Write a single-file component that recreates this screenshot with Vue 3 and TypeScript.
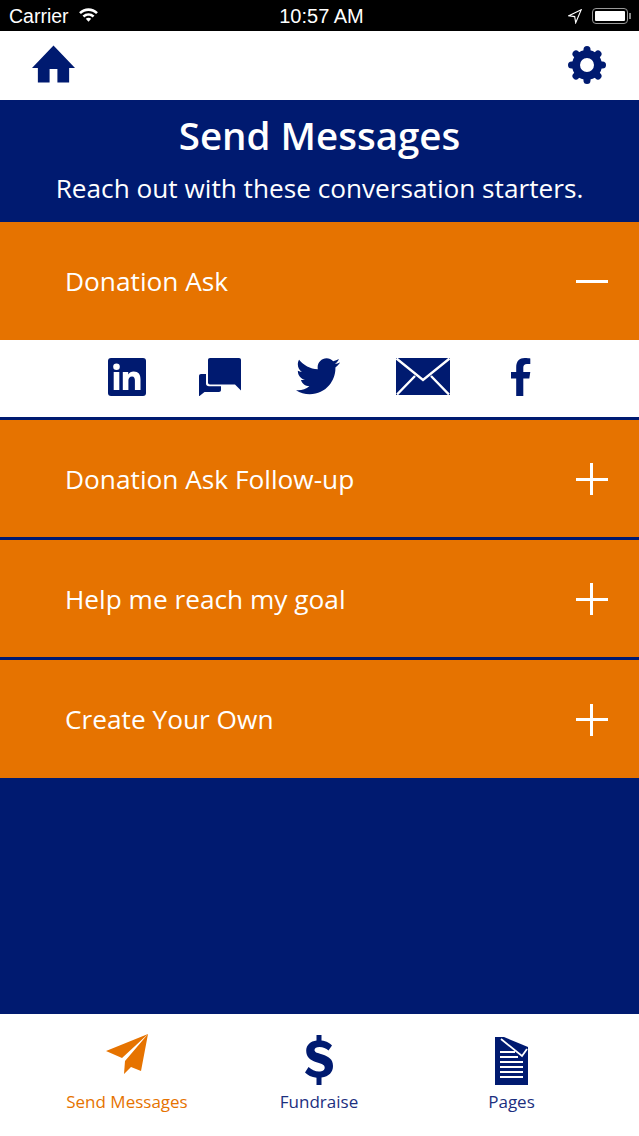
<template>
  <div class="screen">
    <div class="status-bar">
      <div class="status-left">
        <span>Carrier</span>
        <svg class="wifi" viewBox="0 0 20 15" width="21" height="15">
          <path d="M0.600 5.200C5.800 0 14.200 0 19.400 5.200L17.600 7.100C13.400 3 6.600 3 2.400 7.100Z" fill="#fff" />
          <path d="M4 8.600C7.400 5.300 12.600 5.300 16 8.600L14.200 10.400C11.800 8.100 8.200 8.100 5.800 10.400Z" fill="#fff" />
          <path d="M7.300 11.800C8.800 10.500 11.200 10.500 12.700 11.800L10 14.700Z" fill="#fff" />
        </svg>
      </div>
      <span class="status-time">10:57 AM</span>
      <div class="status-right">
        <svg viewBox="0 0 14 15" width="14" height="15">
          <path d="M13.200 0.800L0.800 6.800L6.700 7.600L7.700 13.800Z" fill="none" stroke="#fff" stroke-width="1.100" />
        </svg>
        <div class="battery"><div class="battery-level"></div></div>
        <div class="battery-tip"></div>
      </div>
    </div>

    <nav class="top-nav">
      <svg class="home" viewBox="0 0 44 38" width="44" height="38">
        <path d="M22 0L44 23H38V38H26V24H18V38H6V23H0Z" fill="#001a70" />
      </svg>
      <svg class="gear" viewBox="0 0 38 38" width="38" height="38">
        <circle cx="19" cy="19" r="11" fill="none" stroke="#001a70" stroke-width="8" />
        <g stroke="#001a70" stroke-width="7" stroke-linecap="round">
          <line x1="19" y1="3.500" x2="19" y2="8" />
          <line x1="19" y1="30" x2="19" y2="34.500" />
          <line x1="3.500" y1="19" x2="8" y2="19" />
          <line x1="30" y1="19" x2="34.500" y2="19" />
          <line x1="8" y1="8" x2="11" y2="11" />
          <line x1="27" y1="27" x2="30" y2="30" />
          <line x1="8" y1="30" x2="11" y2="27" />
          <line x1="27" y1="11" x2="30" y2="8" />
        </g>
      </svg>
    </nav>

    <header class="page-header">
      <h1>Send Messages</h1>
      <p>Reach out with these conversation starters.</p>
    </header>

    <section class="accordion">
      <div class="row row-first">
        <span>{{ rows[0] }}</span>
        <span class="toggle minus"></span>
      </div>
      <div class="share">
        <svg class="linkedin" viewBox="0 0 38 38" width="38" height="38">
          <rect width="38" height="38" rx="3" fill="#001a70" />
          <circle cx="8.500" cy="8.700" r="3.300" fill="#fff" />
          <rect x="5.700" y="14" width="5.600" height="18" fill="#fff" />
          <path d="M14.800 14H20.200V16.500C21.300 14.700 23.200 13.600 25.600 13.600C30.500 13.600 32.500 16.500 32.500 21.500V32H26.900V22.600C26.900 20.200 26.200 18.500 24 18.500C21.700 18.500 20.400 20.200 20.400 22.600V32H14.800Z" fill="#fff" />
        </svg>
        <svg class="chat" viewBox="0 0 42 38" width="42" height="38">
          <path d="M11 0H40C41.200 0 42 0.800 42 2V32.500L36 26.500H11C9.800 26.500 9 25.700 9 24.500V2C9 0.800 9.800 0 11 0Z" fill="#001a70" />
          <path d="M7 16V25.500C7 27.200 8.200 28.300 10 28.300H22V32C22 33.200 21.200 34 20 34H5.500L0.500 38H0V18C0 16.800 0.800 16 2 16Z" fill="#001a70" />
        </svg>
        <svg class="twitter" viewBox="0 0 24 20" width="44" height="37">
          <path
            d="M24 2.400c-.9.400-1.800.7-2.800.8 1-.6 1.800-1.600 2.200-2.700-1 .6-2 1-3.100 1.200C19.300.7 18 .1 16.700.1c-2.700 0-4.900 2.200-4.900 4.900 0 .4 0 .8.100 1.100C7.700 5.900 4.100 3.900 1.700.9 1.200 1.600 1 2.500 1 3.400c0 1.700.900 3.200 2.200 4.100-.8 0-1.600-.2-2.200-.6v.1c0 2.400 1.700 4.400 3.900 4.800-.7.200-1.500.2-2.200.1.600 2 2.400 3.400 4.600 3.400-2.100 1.600-4.300 2.500-7.300 2.200 2.200 1.400 4.800 2.200 7.500 2.200 9 0 14-7.500 14-14v-.6c1-.7 1.800-1.600 2.500-2.600z"
            fill="#001a70"
          />
        </svg>
        <svg class="mail" viewBox="0 0 54 37" width="54" height="37">
          <rect width="54" height="37" fill="#001a70" />
          <path d="M0.500 0.500L27 22L53.500 0.500M1 36.500L19 18M53 36.500L35 18" fill="none" stroke="#fff" stroke-width="2.400" />
        </svg>
        <svg class="facebook" viewBox="0 0 20 38" width="20" height="38">
          <path d="M5.200 38V20.500H0V14H5.200V9C5.200 3.200 8.500 0 13.700 0C16 0 18.400 0.300 19.300 0.500V6H16C13.500 6 12.300 7.300 12.300 9.400V14H19.300L18.300 20.500H12.300V38Z" fill="#001a70" />
        </svg>
      </div>
      <div v-for="label in rows.slice(1)" :key="label" class="row">
        <span>{{ label }}</span>
        <span class="toggle plus"></span>
      </div>
    </section>

    <div class="filler"></div>

    <footer class="tab-bar">
      <div class="tab active">
        <svg class="plane" viewBox="0 0 42 40" width="42" height="40">
          <path d="M42 0L0 17L16 24ZM42 0L19 27L18 40L25 33L35 37Z" fill="#e67300" />
        </svg>
        <span>Send Messages</span>
      </div>
      <div class="tab">
        <svg viewBox="0 0 28 50" width="28" height="50">
          <path
            d="M11.500 0H16.500V5.500C21.500 6 25.500 8.500 27 10.500L23.500 15.500C21 13.300 18 12 14.500 12C11.500 12 9.500 13 9.500 15C9.500 17.500 13 18 17.500 19.500C23.500 21.500 28 24 28 31C28 37 24 41.500 16.500 42.500V50H11.500V42.800C6.500 42.300 2.500 40 0 37.500L3.500 32C6.500 34.500 10 36.500 14 36.500C17.500 36.500 19.700 35.300 19.700 32.500C19.700 29.500 16 28.800 11.500 27.300C5.500 25.300 1.200 22.500 1.200 15.800C1.200 10 5.500 6.200 11.500 5.500Z"
            fill="#001a70"
          />
        </svg>
        <span>Fundraise</span>
      </div>
      <div class="tab">
        <svg viewBox="0 0 33 48" width="33" height="48">
          <path d="M0 0H9L33 10V48H0Z" fill="#001a70" />
          <path d="M6 2L27 19L32 12" fill="none" stroke="#fff" stroke-width="1.800" />
          <path d="M5 15H20M5 20H23M5 25H28M5 30H28M5 35H28M5 40H28" stroke="#fff" stroke-width="1.800" fill="none" />
        </svg>
        <span>Pages</span>
      </div>
    </footer>
  </div>
</template>

<script setup lang="ts">
const rows: string[] = [
  'Donation Ask',
  'Donation Ask Follow-up',
  'Help me reach my goal',
  'Create Your Own'
];
</script>

<style scoped>
.screen {
  width: 639px;
  height: 1136px;
  display: flex;
  flex-direction: column;
  background-color: #001a70;
  font-family: "Open Sans", "Noto Sans", sans-serif;
  overflow: hidden;
}

.status-bar {
  height: 31px;
  box-sizing: border-box;
  padding: 1px 9px 0;
  display: grid;
  grid-template-columns: 1fr auto 1fr;
  align-items: center;
  background-color: #000;
  color: #fff;
  font-family: "Liberation Sans", Arial, sans-serif;
  font-size: 19.5px;
}

.status-time {
  margin-left: 4px;
  font-size: 20px;
}

.status-left {
  display: flex;
  align-items: center;
  gap: 9px;
}

.wifi {
  margin-top: -4px;
}

.status-right {
  display: flex;
  align-items: center;
  justify-content: flex-end;
  gap: 10px;
}

.battery {
  width: 36px;
  height: 16px;
  padding: 2px;
  margin-right: -9px;
  box-sizing: border-box;
  border: 1px solid #999;
  border-radius: 4px;
}

.battery-level {
  height: 100%;
  background-color: #fff;
  border-radius: 1px;
}

.battery-tip {
  width: 2px;
  height: 6px;
  margin-right: -1px;
  background-color: #888;
}

.top-nav {
  height: 69px;
  display: flex;
  align-items: center;
  justify-content: space-between;
  padding: 0 33px 0 32px;
  background-color: #fff;
}

.home {
  width: 43px;
  margin-bottom: 4px;
}

.gear {
  margin-bottom: 2px;
}

.page-header {
  height: 122px;
  box-sizing: border-box;
  padding-top: 11px;
  text-align: center;
  color: #fff;
}

.page-header h1 {
  margin: 0;
  font-size: 38.5px;
  line-height: 48px;
  font-weight: 600;
}

.page-header p {
  margin: 12px 0 0;
  font-size: 26.2px;
  line-height: 34px;
}

.row {
  height: 117px;
  margin-bottom: 3px;
  display: flex;
  align-items: center;
  justify-content: space-between;
  padding: 0 31px 0 65px;
  background-color: #e67300;
  color: #fff;
  font-size: 26.25px;
}

.row:last-child {
  height: 118px;
  margin-bottom: 0;
}

.row-first {
  height: 118px;
  margin-bottom: 0;
}

.toggle {
  position: relative;
  width: 32px;
  height: 32px;
  margin-top: 1px;
  background: linear-gradient(#fff, #fff) center / 32px 3px no-repeat;
}

.plus::after {
  content: "";
  position: absolute;
  left: 14px;
  top: 0;
  width: 3px;
  height: 32px;
  background-color: #fff;
}

.share {
  height: 77px;
  box-sizing: border-box;
  padding-bottom: 4px;
  margin-bottom: 3px;
  display: flex;
  align-items: center;
  background-color: #fff;
}

.linkedin {
  margin-left: 108px;
}

.chat {
  margin-left: 53px;
}

.twitter {
  margin-left: 55px;
}

.mail {
  margin-left: 56px;
}

.facebook {
  margin-left: 61px;
}

.filler {
  flex: 1;
}

.tab-bar {
  height: 122px;
  display: grid;
  grid-template-columns: 254px 130px 255px;
  background-color: #fff;
}

.tab {
  height: 100px;
  display: flex;
  flex-direction: column;
  align-items: center;
  justify-content: flex-end;
  gap: 5px;
  color: #1c2f7f;
  font-size: 17px;
  line-height: 24px;
}

.tab.active {
  color: #e67300;
}

.plane {
  margin-bottom: 11px;
}
</style>

<style>
body {
  background-color: #001a70;
}
</style>
